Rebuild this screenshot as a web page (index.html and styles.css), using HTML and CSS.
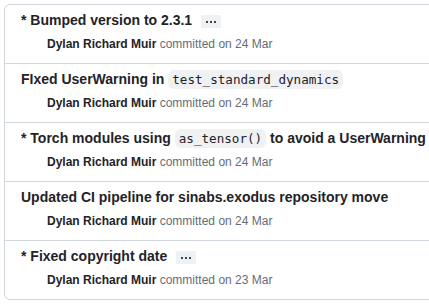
FILE: index.html
```html
<!DOCTYPE html>
<html>
<head>
    <meta charset="UTF-8">
    <title>Commits</title>
    <link rel="stylesheet" href="styles.css">
</head>
<body>
    <div class="commit-list">
        <div class="commit">
            <p class="title">* Bumped version to 2.3.1 <button class="more"><svg width="10" height="2" viewBox="0 0 10 2"><rect x="0" y="0" width="2" height="2"/><rect x="4" y="0" width="2" height="2"/><rect x="8" y="0" width="2" height="2"/></svg></button></p>
            <div class="meta"><span class="author">Dylan Richard Muir</span> committed on 24 Mar</div>
        </div>
        <div class="commit">
            <p class="title">FIxed UserWarning in <code>test_standard_dynamics</code></p>
            <div class="meta"><span class="author">Dylan Richard Muir</span> committed on 24 Mar</div>
        </div>
        <div class="commit">
            <p class="title">* Torch modules using <code>as_tensor()</code> to avoid a UserWarning</p>
            <div class="meta"><span class="author">Dylan Richard Muir</span> committed on 24 Mar</div>
        </div>
        <div class="commit">
            <p class="title">Updated CI pipeline for sinabs.exodus repository move</p>
            <div class="meta"><span class="author">Dylan Richard Muir</span> committed on 24 Mar</div>
        </div>
        <div class="commit">
            <p class="title">* Fixed copyright date <button class="more"><svg width="10" height="2" viewBox="0 0 10 2"><rect x="0" y="0" width="2" height="2"/><rect x="4" y="0" width="2" height="2"/><rect x="8" y="0" width="2" height="2"/></svg></button></p>
            <div class="meta"><span class="author">Dylan Richard Muir</span> committed on 23 Mar</div>
        </div>
    </div>
</body>
</html>
```

FILE: styles.css
```css
body {
    margin: 4px 0 0 4px;
    font-family: 'Liberation Sans', Arial, sans-serif;
    color: #1f2328;
    background: #ffffff;
    overflow: hidden;
}
.commit-list {
    width: 460px;
    border: 1px solid #d0d7de;
    border-radius: 6px;
}
.commit {
    padding: 5px 16px 10px;
    border-top: 1px solid #d0d7de;
    white-space: nowrap;
}
.commit:first-child {
    border-top: none;
}
.title {
    margin: 0;
    font-size: 14px;
    font-weight: bold;
    line-height: 21px;
}
code {
    font-family: 'DejaVu Sans Mono', monospace;
    font-size: 12.6px;
    font-weight: normal;
    background: #eff1f3;
    padding: 2px 4px;
    border-radius: 6px;
}
.more {
    display: inline-block;
    vertical-align: middle;
    margin-left: 5px;
    width: 20px;
    height: 13px;
    padding: 0;
    border: none;
    border-radius: 1px;
    background: #eff1f3;
    line-height: 0;
}
.more svg {
    fill: #3d444d;
}
.meta {
    margin-top: 4px;
    padding-left: 26px;
    font-size: 12px;
    line-height: 18px;
    color: #656d76;
}
.author {
    font-weight: bold;
    color: #1f2328;
}
```
